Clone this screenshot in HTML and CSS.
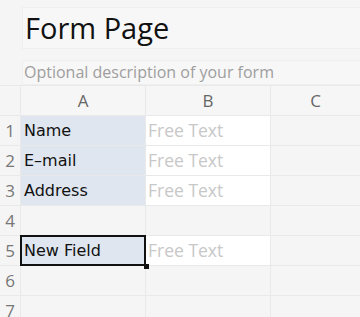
FILE: index.html
```html
<!DOCTYPE html>
<html lang="en">
<head>
    <meta charset="UTF-8">
    <meta name="viewport" content="width=device-width, initial-scale=1.0">
    <title>Form Page</title>
    <link rel="stylesheet" href="styles.css">
</head>
<body>
    <div class="form-head">
        <div class="form-title">Form Page</div>
        <div class="form-desc">Optional description of your form</div>
    </div>

    <div class="sheet">
        <div class="corner"></div>
        <div class="col-head">A</div>
        <div class="col-head">B</div>
        <div class="col-head">C</div>

        <div class="row-num">1</div>
        <div class="cell label">Name</div>
        <div class="cell input">Free Text</div>
        <div class="cell"></div>

        <div class="row-num">2</div>
        <div class="cell label">E&#8211;mail</div>
        <div class="cell input">Free Text</div>
        <div class="cell"></div>

        <div class="row-num">3</div>
        <div class="cell label">Address</div>
        <div class="cell input">Free Text</div>
        <div class="cell"></div>

        <div class="row-num">4</div>
        <div class="cell"></div>
        <div class="cell"></div>
        <div class="cell"></div>

        <div class="row-num">5</div>
        <div class="cell label selected">New Field</div>
        <div class="cell input">Free Text</div>
        <div class="cell"></div>

        <div class="row-num">6</div>
        <div class="cell"></div>
        <div class="cell"></div>
        <div class="cell"></div>

        <div class="row-num">7</div>
        <div class="cell"></div>
        <div class="cell"></div>
        <div class="cell"></div>
    </div>
</body>
</html>
```

FILE: styles.css
```css
body {
    margin: 0;
    background-color: #f5f5f5;
    font-family: "Open Sans", sans-serif;
    overflow: hidden;
}
.form-head {
    padding: 7px 0 0 22px;
    height: 78px;
}
.form-title {
    height: 40px;
    line-height: 40px;
    font-size: 29px;
    color: #111;
    padding-left: 2px;
    background-color: #f7f7f7;
    border: 1px solid #efefef;
    border-right: none;
}
.form-desc {
    margin-top: 11px;
    height: 23px;
    line-height: 23px;
    font-size: 16px;
    color: #9e9e9e;
    padding-left: 1px;
    background-color: #f7f7f7;
    border: 1px solid #efefef;
    border-right: none;
}
.sheet {
    display: grid;
    grid-template-columns: 20px 124px 124px 1fr;
    grid-auto-rows: 29px;
    gap: 1px;
    padding-top: 1px;
    background-color: #e9e9e9;
}
.corner, .col-head, .row-num, .cell {
    background-color: #f5f5f5;
}
.col-head {
    text-align: center;
    line-height: 29px;
    font-size: 17px;
    color: #666;
    background-color: #f6f6f6;
}
.row-num {
    text-align: center;
    line-height: 29px;
    font-size: 17px;
    color: #777;
}
.cell {
    line-height: 29px;
    padding-left: 3px;
    white-space: nowrap;
}
.label {
    background-color: #dfe6ef;
    font-family: "DejaVu Sans", sans-serif;
    font-size: 16px;
    color: #111;
}
.input {
    background-color: #fff;
    font-size: 17.5px;
    color: #c8c8c8;
    padding-left: 2px;
}
.selected {
    position: relative;
}
.selected::after {
    content: "";
    position: absolute;
    top: -1px;
    left: -1px;
    right: -1px;
    bottom: -1px;
    border: 2px solid #111;
}
.selected::before {
    content: "";
    position: absolute;
    right: -4px;
    bottom: -4px;
    width: 5px;
    height: 5px;
    background-color: #111;
    z-index: 1;
}
```
